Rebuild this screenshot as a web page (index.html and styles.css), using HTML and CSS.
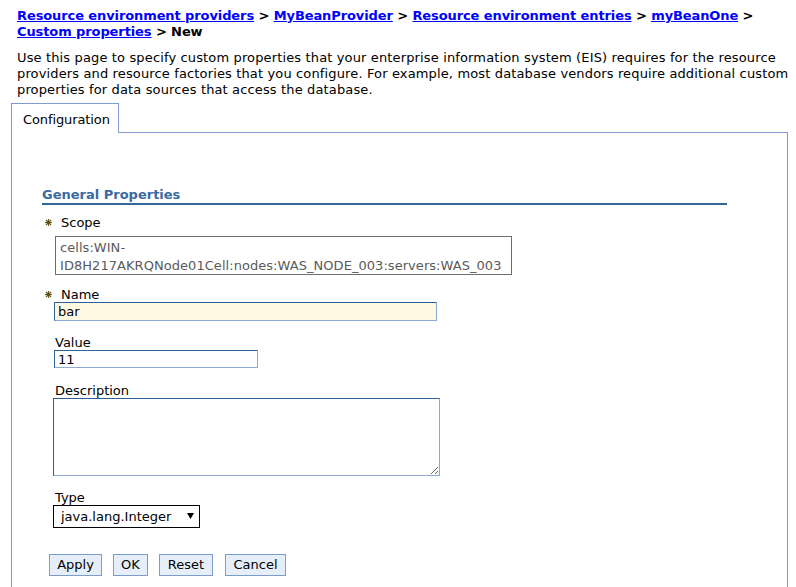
FILE: index.html
```html
<!DOCTYPE html>
<html>
<head>
<meta charset="utf-8">
<title>Custom properties - New</title>
<link rel="stylesheet" href="styles.css">
</head>
<body>
<div class="page">
  <div class="crumbs">
    <a href="#">Resource environment providers</a> &gt; <a href="#">MyBeanProvider</a> &gt; <a href="#">Resource environment entries</a> &gt; <a href="#">myBeanOne</a> &gt;<br>
    <a href="#">Custom properties</a> &gt; New
  </div>
  <p class="intro">Use this page to specify custom properties that your enterprise information system (EIS) requires for the resource<br>providers and resource factories that you configure. For example, most database vendors require additional custom<br>properties for data sources that access the database.</p>

  <div class="tabs">
    <div class="tab">Configuration</div>
  </div>
  <div class="panel">
    <div class="section">
      <h2 class="section-title">General Properties</h2>
      <div class="fields">
        <div class="field">
          <label class="label req"><svg class="star" width="7" height="7" viewBox="0 0 7 7"><g stroke="#6e5f22" stroke-width="1.2"><line x1="3.5" y1="0" x2="3.5" y2="7"/><line x1="0" y1="3.5" x2="7" y2="3.5"/><line x1="1" y1="1" x2="6" y2="6"/><line x1="6" y1="1" x2="1" y2="6"/></g><circle cx="3.5" cy="3.5" r="1.4" fill="#5a4c14"/></svg>Scope</label>
          <div class="readonly">cells:WIN-<br>ID8H217AKRQNode01Cell:nodes:WAS_NODE_003:servers:WAS_003</div>
        </div>
        <div class="field field-name">
          <label class="label req"><svg class="star" width="7" height="7" viewBox="0 0 7 7"><g stroke="#6e5f22" stroke-width="1.2"><line x1="3.5" y1="0" x2="3.5" y2="7"/><line x1="0" y1="3.5" x2="7" y2="3.5"/><line x1="1" y1="1" x2="6" y2="6"/><line x1="6" y1="1" x2="1" y2="6"/></g><circle cx="3.5" cy="3.5" r="1.4" fill="#5a4c14"/></svg>Name</label>
          <input class="text name" type="text" value="bar">
        </div>
        <div class="field">
          <label class="label">Value</label>
          <input class="text value" type="text" value="11">
        </div>
        <div class="field field-desc">
          <label class="label">Description</label>
          <textarea class="desc"></textarea>
        </div>
        <div class="field">
          <label class="label">Type</label>
          <div class="select-wrap">
            <select class="select"><option>java.lang.Integer</option></select>
            <svg class="arrow" width="7" height="6" viewBox="0 0 7 6"><polygon points="0,0 7,0 3.5,6" fill="#000"/></svg>
          </div>
        </div>
      </div>
      <div class="buttons">
        <button class="btn btn-apply">Apply</button>
        <button class="btn btn-ok">OK</button>
        <button class="btn btn-reset">Reset</button>
        <button class="btn btn-cancel">Cancel</button>
      </div>
    </div>
  </div>
</div>
</body>
</html>
```

FILE: styles.css
```css
* { box-sizing: border-box; }
html, body { margin: 0; padding: 0; background: #fff; }
body {
  font-family: "DejaVu Sans", Verdana, sans-serif;
  font-size: 13px;
  color: #000;
}
.page {
  padding: 8px 8px 0 11px;
}
.crumbs {
  margin-left: 6px;
  font-weight: bold;
  line-height: 16px;
  letter-spacing: -0.1px;
  white-space: nowrap;
}
.crumbs a { color: #0000ff; text-decoration: underline; }
.intro {
  margin: 10px 0 0 6px;
  line-height: 16px;
  letter-spacing: 0.14px;
  white-space: nowrap;
}
.tabs {
  display: flex;
  margin-top: 5px;
}
.tab {
  position: relative;
  z-index: 1;
  height: 30px;
  margin-bottom: -1px;
  padding: 8px 8px 0 11px;
  line-height: 16px;
  border: 1px solid #7f9bd0;
  border-bottom: none;
  background: #fff;
  letter-spacing: -0.1px;
}
.panel {
  border: 1px solid #7f9bd0;
  border-bottom: none;
  padding: 54px 0 40px 30px;
  width: 777px;
}
.section { width: 685px; }
.section-title {
  margin: 0;
  font-size: 13px;
  line-height: 16px;
  font-weight: bold;
  color: #3a6aa2;
  border-bottom: 2px solid #336699;
}
.fields {
  display: flex;
  flex-direction: column;
  gap: 15px;
  padding: 11px 0 0 12px;
}
.field {
  display: flex;
  flex-direction: column;
  align-items: flex-start;
}
.field-name { margin-top: -2px; }
.field-desc { margin-top: 1px; }
.label {
  display: flex;
  align-items: center;
  line-height: 14px;
  padding-left: 1px;
}
.label.req {
  margin-left: -9px;
  padding-left: 0;
}
.star {
  margin-right: 9px;
  margin-top: -1px;
}
.label.req + .readonly { margin-top: 6px; }
.readonly {
  width: 457px;
  height: 39px;
  margin-left: 1px;
  padding: 2px 4px 0;
  border: 1px solid #6d6d6d;
  color: #5a5a5a;
  line-height: 18px;
  letter-spacing: 0.05px;
  white-space: nowrap;
}
.text, .desc {
  font-family: "DejaVu Sans", Verdana, sans-serif;
  font-size: 13px;
  color: #000;
  border: 1px solid;
  border-color: #2d5f99 #8eaad2 #8eaad2 #2d5f99;
  margin: 0;
  outline: none;
}
.text {
  height: 18px;
  padding: 0 3px;
  line-height: 16px;
}
.name { width: 383px; background: #fff8e3; height: 19px; }
.value { width: 204px; background: #fff; }
.desc {
  width: 387px;
  height: 78px;
  margin-left: -1px;
  padding: 2px;
  resize: both;
}
.select-wrap {
  position: relative;
  margin-left: -1px;
}
.select {
  -webkit-appearance: none;
  appearance: none;
  width: 147px;
  height: 23px;
  padding: 0 0 0 7px;
  border: 1px solid #000;
  border-radius: 0;
  background: #fff;
  font-family: "DejaVu Sans", Verdana, sans-serif;
  font-size: 13px;
  color: #000;
  outline: none;
}
.arrow {
  position: absolute;
  left: 134px;
  top: 8px;
  pointer-events: none;
}
.buttons {
  display: flex;
  gap: 11px;
  margin: 26px 0 0 7px;
}
.btn {
  height: 22px;
  padding: 0;
  border: 1px solid #7e9cc9;
  background: #e6eefa;
  font-family: "DejaVu Sans", Verdana, sans-serif;
  font-size: 13px;
  color: #000;
  border-radius: 0;
  line-height: 18px;
  text-align: center;
}
.btn-apply { width: 53px; }
.btn-ok { width: 35px; }
.btn-reset { width: 54px; }
.btn-cancel { width: 61px; margin-left: 1px; }
```
